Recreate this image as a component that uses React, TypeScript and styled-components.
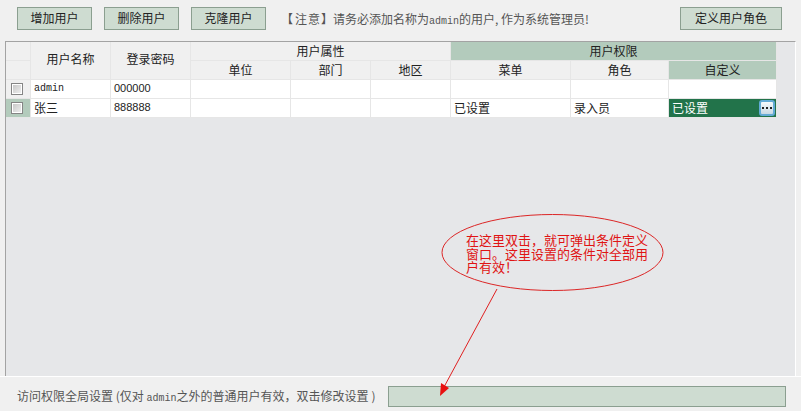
import { Fragment } from "react";
import styled, { createGlobalStyle } from "styled-components";

const GlobalStyle = createGlobalStyle`
  html, body { margin: 0; padding: 0; background: #f0f0f0; }
  body { font-family: "Noto Sans CJK SC", "Liberation Sans", sans-serif; font-size: 12px; color: #222; }
`;

const Page = styled.div`
  position: relative;
  width: 801px;
  height: 411px;
  display: flex;
  flex-direction: column;
  overflow: hidden;
  background: #f0f0f0;
`;

const Toolbar = styled.div`
  height: 41px;
  box-sizing: border-box;
  padding: 7px 19px 0 17px;
  display: flex;
  align-items: flex-start;
  gap: 12px;
`;

const ActionButton = styled.button<{ $wide?: boolean }>`
  width: ${(p) => (p.$wide ? "102px" : "75px")};
  height: 23px;
  padding: 0 0 2px;
  box-sizing: border-box;
  border: 1px solid #8b9f90;
  background: #cedcd1;
  color: #222;
  font: 12px/1 "Noto Sans CJK SC", sans-serif;
`;

const Note = styled.div`
  flex: 1;
  margin-left: 3px;
  line-height: 23px;
  color: #555;
  white-space: nowrap;
`;

const NoteOpen = styled.span`
  margin-right: 2px;
`;

const NoteTag = styled.span`
  letter-spacing: 1px;
`;

const Latin = styled.span`
  font-family: "Liberation Mono", monospace;
  font-size: 10px;
`;

const GridArea = styled.div`
  flex: 1;
  margin-left: 5px;
  width: 791px;
  box-sizing: border-box;
  border-top: 1px solid #a3a3a3;
  border-left: 1px solid #a3a3a3;
  border-right: 1px solid #fff;
  background: #e6e7e9;
`;

const Table = styled.div`
  display: grid;
  grid-template-columns: 25px 80px 80px 100px 80px 80px 120px 98px 108px;
  grid-auto-rows: 19px;
  width: 771px;
`;

const Cell = styled.div<{ $span?: number; $rows?: number; $tone?: "head" | "active" | "select" | "plain" }>`
  grid-column: span ${(p) => p.$span ?? 1};
  grid-row: span ${(p) => p.$rows ?? 1};
  box-sizing: border-box;
  border-right: 1px solid #e6e6e6;
  border-bottom: 1px solid #e6e6e6;
  display: flex;
  align-items: center;
  justify-content: ${(p) => (p.$tone === "head" || p.$tone === "active" ? "center" : "flex-start")};
  padding-left: ${(p) => (p.$tone === "head" || p.$tone === "active" ? "0" : "3px")};
  padding-bottom: ${(p) => (p.$rows ? "3px" : p.$tone === "head" || p.$tone === "active" ? "1px" : "0")};
  background: ${(p) =>
    p.$tone === "head" ? "#f0f0f0" : p.$tone === "active" ? "#b3cbbc" : p.$tone === "select" ? "#22734a" : "#fff"};
  color: ${(p) => (p.$tone === "select" ? "#fff" : "#222")};
  white-space: nowrap;
  line-height: 18px;
`;

const RowHead = styled.div<{ $current?: boolean }>`
  box-sizing: border-box;
  border-right: 1px solid #e6e6e6;
  border-bottom: 1px solid #e6e6e6;
  background: ${(p) => (p.$current ? "#b3cbbc" : "#f0f0f0")};
  display: flex;
  align-items: center;
  padding-left: 5px;
`;

const Check = styled.span`
  width: 12px;
  height: 12px;
  box-sizing: border-box;
  border: 1px solid #858585;
  box-shadow: inset 0 0 0 1px #fff;
  background: linear-gradient(135deg, #c4c4c4, #f2f2f2);
`;

const Mono = styled.span`
  font-family: "Liberation Mono", monospace;
  font-size: 10px;
`;

const Digits = styled.span`
  font-family: "Liberation Sans", sans-serif;
  font-size: 11px;
  margin-bottom: 2px;
`;

const SelectText = styled.span`
  flex: 1;
`;

const MoreButton = styled.span`
  width: 16px;
  height: 16px;
  margin-right: 1px;
  box-sizing: border-box;
  border: 2px solid #63abd6;
  border-radius: 3px;
  background: linear-gradient(#f6f9fb, #c9d9e4);
  display: flex;
  align-items: center;
  justify-content: center;
`;

const Footer = styled.div`
  height: 35px;
  box-sizing: border-box;
  border-top: 1px solid #fff;
  padding: 9px 15px 0 17px;
  display: flex;
  align-items: flex-start;
  justify-content: space-between;
`;

const FooterLabel = styled.div`
  line-height: 20px;
  color: #555;
  white-space: nowrap;
`;

const FooterClose = styled.span`
  margin-left: 3px;
`;

const GlobalField = styled.div`
  width: 398px;
  height: 21px;
  box-sizing: border-box;
  border: 1px solid #8b9f90;
  background: #cedcd1;
`;

const Callout = styled.svg`
  position: absolute;
  left: 0;
  top: 0;
  pointer-events: none;
`;

const CalloutText = styled.div`
  position: absolute;
  left: 466px;
  top: 233px;
  width: 184px;
  color: #e01414;
  font-size: 13px;
  line-height: 13.5px;
`;

const rows = [
  { id: "admin", name: <Mono>admin</Mono>, pass: "000000", menu: "", role: "", custom: "" },
  { id: "zhangsan", name: "张三", pass: "888888", menu: "已设置", role: "录入员", custom: "已设置", current: true },
];

export default function App() {
  return (
    <Page>
      <GlobalStyle />
      <Toolbar>
        <ActionButton>增加用户</ActionButton>
        <ActionButton>删除用户</ActionButton>
        <ActionButton>克隆用户</ActionButton>
        <Note>
          <NoteOpen>【</NoteOpen>
          <NoteTag>注意</NoteTag>】请务必添加名称为<Latin>admin</Latin>的用户, 作为系统管理员!
        </Note>
        <ActionButton $wide>定义用户角色</ActionButton>
      </Toolbar>

      <GridArea>
        <Table>
          <RowHead />
          <Cell $tone="head" $rows={2}>用户名称</Cell>
          <Cell $tone="head" $rows={2}>登录密码</Cell>
          <Cell $tone="head" $span={3}>用户属性</Cell>
          <Cell $tone="active" $span={3}>用户权限</Cell>

          <RowHead />
          <Cell $tone="head">单位</Cell>
          <Cell $tone="head">部门</Cell>
          <Cell $tone="head">地区</Cell>
          <Cell $tone="head">菜单</Cell>
          <Cell $tone="head">角色</Cell>
          <Cell $tone="active">自定义</Cell>

          {rows.map((row) => (
            <Fragment key={row.id}>
              <RowHead $current={row.current}>
                <Check />
              </RowHead>
              <Cell>{row.name}</Cell>
              <Cell><Digits>{row.pass}</Digits></Cell>
              <Cell />
              <Cell />
              <Cell />
              <Cell>{row.menu}</Cell>
              <Cell>{row.role}</Cell>
              {row.current ? (
                <Cell $tone="select">
                  <SelectText>{row.custom}</SelectText>
                  <MoreButton>
                    <svg width="10" height="4" viewBox="0 0 10 4">
                      <rect x="0" y="1" width="2" height="2" fill="#222" />
                      <rect x="4" y="1" width="2" height="2" fill="#222" />
                      <rect x="8" y="1" width="2" height="2" fill="#222" />
                    </svg>
                  </MoreButton>
                </Cell>
              ) : (
                <Cell />
              )}
            </Fragment>
          ))}
        </Table>
      </GridArea>

      <Footer>
        <FooterLabel>
          访问权限全局设置 (仅对 <Latin>admin</Latin>之外的普通用户有效，双击修改设置<FooterClose>)</FooterClose>
        </FooterLabel>
        <GlobalField />
      </Footer>

      <Callout width="801" height="411" viewBox="0 0 801 411">
        <ellipse cx="552.5" cy="252.5" rx="110.5" ry="38" fill="none" stroke="#dc2626" strokeWidth="1" />
        <line x1="497" y1="289" x2="444" y2="387" stroke="#e02020" strokeWidth="1" />
        <polygon points="440,396 441,383 449,388" fill="#e81010" />
      </Callout>
      <CalloutText>在这里双击，就可弹出条件定义窗口。这里设置的条件对全部用户有效！</CalloutText>
    </Page>
  );
}
